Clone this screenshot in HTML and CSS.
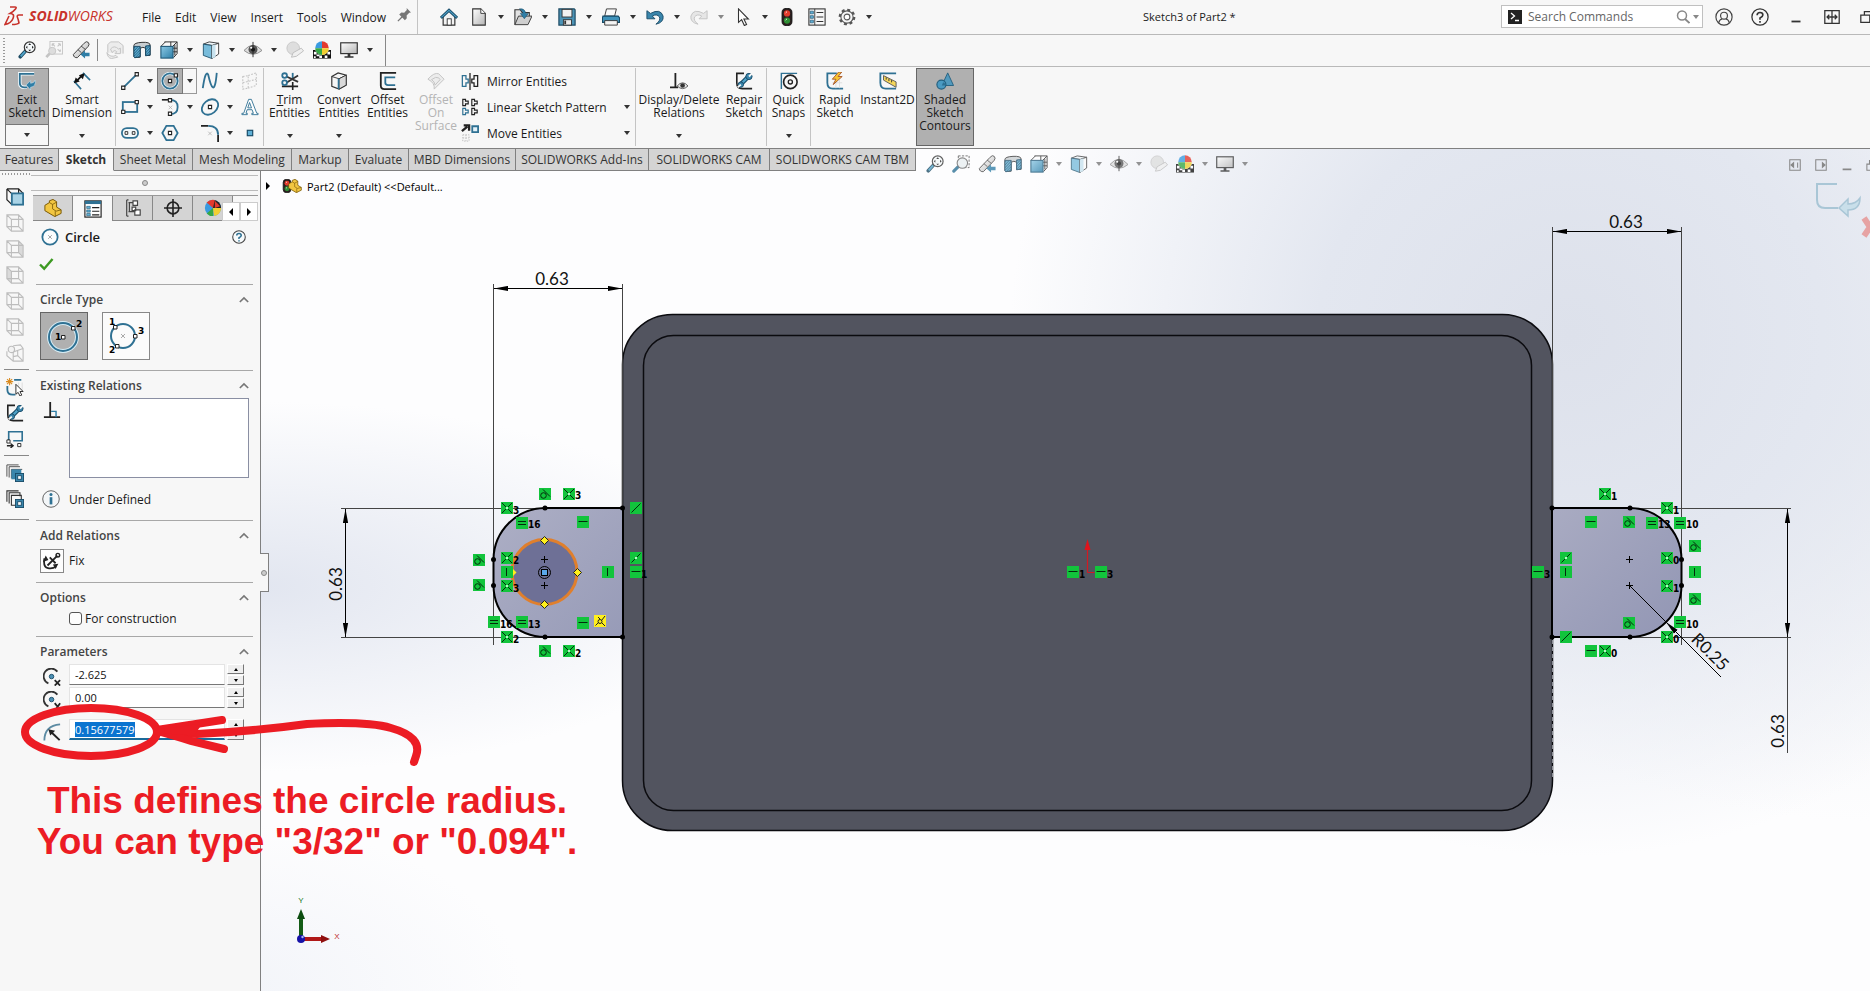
FILE: index.html
```html
<!DOCTYPE html>
<html lang="en">
<head>
<meta charset="utf-8">
<title>Sketch3 of Part2 *</title>
<link rel="stylesheet" href="styles.css">
</head>
<body>
<svg class="defs" aria-hidden="true">
  <defs>
    <linearGradient id="steel" x1="0" y1="0" x2="1" y2="1"><stop offset="0" stop-color="#8cc8e4"/><stop offset="1" stop-color="#2d7fa8"/></linearGradient>
    <linearGradient id="silver" x1="0" y1="0" x2="1" y2="1"><stop offset="0" stop-color="#ffffff"/><stop offset="1" stop-color="#b4b4b4"/></linearGradient>
    <linearGradient id="tabFill" x1="0" y1="0" x2="1" y2="1"><stop offset="0" stop-color="#a9abc2"/><stop offset="1" stop-color="#9296b4"/></linearGradient>
    <pattern id="hatch" width="3" height="3" patternUnits="userSpaceOnUse"><rect width="3" height="3" fill="#5fb0d6"/><path d="M0 3L3 0" stroke="#174a66"/></pattern>
    <marker id="arrow" markerUnits="userSpaceOnUse" markerWidth="15" markerHeight="6" refX="14" refY="3" orient="auto-start-reverse"><path d="M0 0.4L14 3L0 5.6z"/></marker>
    <g id="r-tan"><rect width="12" height="12" fill="#12c43c"/><path d="M4 1.500l7 7" stroke="#032b0c"/><circle cx="4.500" cy="7.500" r="2.800" fill="none" stroke="#032b0c"/></g>
    <g id="r-coin"><rect width="12" height="12" fill="#12c43c"/><path d="M1 1l10 10M11 1L1 11" stroke="#032b0c"/><path d="M5 5h2v2H5z" fill="#b8f0c4"/></g>
    <g id="r-eq"><rect width="12" height="12" fill="#12c43c"/><path d="M2 4.500h8M2 7.500h8" stroke="#032b0c"/></g>
    <g id="r-hor"><rect width="12" height="12" fill="#12c43c"/><path d="M1.500 5.500h9" stroke="#032b0c"/></g>
    <g id="r-ver"><rect width="12" height="12" fill="#12c43c"/><path d="M5.500 2v8" stroke="#032b0c"/></g>
    <g id="r-col"><rect width="12" height="12" fill="#12c43c"/><path d="M1.500 10.500l9-9" stroke="#032b0c"/></g>
    <g id="r-mid"><rect width="12" height="12" fill="#12c43c"/><path d="M1.500 10.500l9-9" stroke="#032b0c"/><path d="M5 5h2v2H5z" fill="#b8f0c4"/></g>
  </defs>
  <symbol id="i-zoomfit" viewBox="0 0 20 20"><path d="M8.500 11L2.500 17.500" stroke="#1d4b63" stroke-width="4" stroke-linecap="round"/><path d="M8 11.500L3 17" stroke="#4fa3c9" stroke-width="2"/><circle cx="13" cy="7" r="6" fill="#f4f8fa" stroke="#333" stroke-width="1.300"/><path d="M13 2.600l1.600 1.800h-3.200zM13 11.400l1.600-1.800h-3.200zM8.600 7l1.800-1.600v3.200zM17.400 7l-1.800-1.600v3.200z" fill="#222"/></symbol>
  <symbol id="i-zoomarea" viewBox="0 0 20 20"><path d="M7 1H19V14H14M7 1V4" fill="none" stroke="#444" stroke-dasharray="2.500 1.500"/><path d="M7 13L2 18" stroke="#2a6f93" stroke-width="3.400" stroke-linecap="round"/><circle cx="11.500" cy="9" r="5.800" fill="#e8eef1" stroke="#666" stroke-width="1.200"/></symbol>
  <symbol id="i-zoomgray" viewBox="0 0 20 20"><g fill="none" stroke="#c4c4c4"><rect x="5.500" y=".5" width="14" height="14"/><path d="M8 3l3 3M8 3h2.500M8 3v2.500M17 3l-3 3M17 3h-2.500M17 3v2.500M17 12l-3-3M17 12v-2.500" stroke-width="1.200"/><circle cx="8" cy="11" r="4" fill="#ddd"/><path d="M5 14L1.500 18" stroke-width="3"/></g></symbol>
  <symbol id="i-prev" viewBox="0 0 20 20"><path d="M1.500 15L13.500 2.500Q16-.5 18 1.500T18 6L6 18.500Q2 19 1.500 15z" fill="url(#silver)" stroke="#444" stroke-width="1.100"/><path d="M10 5.500l5 4M6.500 9.500l4 3.500" stroke="#444"/><path d="M19.500 13h-5v-2.500L9.500 15l5 4.500V17h5z" fill="#2f7ea6"/></symbol>
  <symbol id="i-redraw" viewBox="0 0 20 20"><g fill="#ececec" stroke="#c4c4c4" stroke-width="1.100"><path d="M2 13V4l3-3h9l5 4v9"/><path d="M5 9q4-5 9 0l2-1v6h-6l2-2q-3-3-5 1zM1 13q4 6 10 3l2 2-7 1.500Q2 19 1 13z"/></g></symbol>
  <symbol id="i-section" viewBox="0 0 20 20"><path d="M1 5q0-3 9-3.500t9 3V16h-5V8q-3-2-6 0v10l-6 .5-1-1z" fill="#c9ced1" stroke="#222"/><path d="M1 6h7v11.500l-6 1-1-1zM14 5.500l5-.5v10.500l-5 1z" fill="url(#hatch)" stroke="#174a66"/></symbol>
  <symbol id="i-orient" viewBox="0 0 20 20"><path d="M5 1h14v13l-4 4.500M1 6l5-5M14 6l5-5M12 1v5M14 12h5M16.500 4v12M19 8l-5 0" fill="none" stroke="#333" stroke-width="1.100"/><rect x="1" y="6" width="13.500" height="13" fill="url(#steel)" stroke="#1f5877" stroke-width="1.200"/></symbol>
  <symbol id="i-shade" viewBox="0 0 20 20"><path d="M1.500 3.500L8 1l10.500 1.500L12 5z" fill="#eef6fa" stroke="#333"/><path d="M1.500 3.500L11 5v14.500L1.500 16z" fill="#78bcdb" stroke="#21546e"/><path d="M11 5l7.500-2.500v12L11 19.500z" fill="#fafafa" stroke="#333"/><path d="M11 5l4-1.300v14l-4 1.800z" fill="#c7e2ee"/></symbol>
  <symbol id="i-eye" viewBox="0 0 20 20"><path d="M0 10.500Q10-1 20 10.500Q10 19 0 10.500z" fill="#ddd" stroke="#888"/><circle cx="10" cy="9.500" r="5" fill="#555"/><circle cx="10" cy="9.500" r="2.200" fill="#111"/><path d="M10 1v17" stroke="#222"/><circle cx="8" cy="7.500" r="1.200" fill="#fff"/></symbol>
  <symbol id="i-ballgray" viewBox="0 0 20 20"><circle cx="8" cy="8" r="7" fill="#dedede" stroke="#c6c6c6"/><path d="M6 18l2-5 9-5 2.500 3-8 6z" fill="#efefef" stroke="#bbb"/></symbol>
  <symbol id="i-scene" viewBox="0 0 20 20"><path d="M0 10h20v9.500H0z" fill="#111"/><path d="M1 12h3v3H1zM7 16h3v3H7zM1 17h2v2H1zM13 16h3v3h-3zM16 12h3v3h-3zM4 15h3v2H4z" fill="#fff"/><circle cx="10" cy="8" r="7.600" fill="#fff"/><path d="M10 8V.4A7.600 7.600 0 0 0 2.400 8z" fill="#3a9be0"/><path d="M10 8V.4A7.600 7.600 0 0 1 17.600 8z" fill="#e33a2f"/><path d="M10 8h7.600A7.600 7.600 0 0 1 10 15.600z" fill="#f2cf32"/><path d="M10 8H2.400A7.600 7.600 0 0 0 10 15.600z" fill="#36a844"/></symbol>
  <symbol id="i-monitor" viewBox="0 0 20 20"><rect x=".8" y="2" width="18.400" height="12" fill="url(#silver)" stroke="#333" stroke-width="1.300"/><path d="M8.500 14h3v3h3.500v1.500H5V17h3.500z" fill="#333"/></symbol>

  <symbol id="i-home" viewBox="0 0 20 20"><path d="M3.500 9v10h13V9L10 3z" fill="#f2f2f2" stroke="#333" stroke-width="1.300"/><rect x="8" y="12" width="4.500" height="7" fill="#fff" stroke="#333"/><path d="M1 11L10 2.500 19 11" fill="none" stroke="#174a66" stroke-width="3.400"/><path d="M1.500 10.500L10 2.500l8.500 8" fill="none" stroke="#4e9fc6" stroke-width="1.200"/></symbol>
  <symbol id="i-new" viewBox="0 0 20 20"><path d="M3 1h9l5 5v13H3z" fill="url(#silver)" stroke="#333" stroke-width="1.200"/><path d="M12 1v5h5" fill="#fff" stroke="#333"/></symbol>
  <symbol id="i-open" viewBox="0 0 20 20"><path d="M1 18.500V2h6l2 3h8v5" fill="#e2e2e2" stroke="#333" stroke-width="1.200"/><path d="M1 18.500L5 9h15l-4.500 9.500z" fill="#cfcfcf" stroke="#333"/><path d="M6 1q6-1 7 5h3l-4.500 6L7 6h3q0-3-4-5z" fill="#2f7ea6" stroke="#174a66" stroke-width=".6"/></symbol>
  <symbol id="i-save" viewBox="0 0 20 20"><path d="M1 1h17l1 1v17H1z" fill="#4b93b6" stroke="#1d4b63" stroke-width="1.300"/><rect x="4.500" y="1.500" width="11" height="8.500" fill="#f2f2f2" stroke="#333"/><rect x="6" y="13" width="9" height="6" fill="#ececec" stroke="#333"/><path d="M8 14v4" stroke="#333" stroke-width="2"/></symbol>
  <symbol id="i-print" viewBox="0 0 20 20"><path d="M5 1h11l-2 8H3z" fill="#fafafa" stroke="#333"/><path d="M1 9h17l1.500 2v5H.5v-5z" fill="#3f93bb" stroke="#174a66" stroke-width="1.200"/><path d="M3 14h14v5H3z" fill="#f4f4f4" stroke="#333"/></symbol>
  <symbol id="i-undo" viewBox="0 0 20 20"><path d="M1 3v9h9L7 9q5-3 8 1 1.500 4-4 8 9-2 8-9Q16 0 5 6z" fill="#3a86ac" stroke="#174a66"/></symbol>
  <symbol id="i-redo" viewBox="0 0 20 20"><path d="M19 3v9h-9l3-3Q8 6 5 10q-1.500 4 4 8Q0 16 1 9 4 0 15 6z" fill="#e6e6e6" stroke="#c2c2c2"/></symbol>
  <symbol id="i-cursor" viewBox="0 0 20 20"><path d="M5 1v15l3.500-3 3 6.500 2.500-1.200-3-6H16z" fill="#fff" stroke="#333" stroke-width="1.200"/></symbol>
  <symbol id="i-traffic" viewBox="0 0 20 20"><rect x="4.500" y=".5" width="11" height="19" rx="4.500" fill="#2c1f1f" stroke="#111"/><circle cx="10" cy="6" r="3.500" fill="#e33b2c"/><circle cx="10" cy="14" r="3.500" fill="#2f8f35"/><path d="M8.500 5.500L10 4M8.500 13.500L10 12" stroke="#fff"/></symbol>
  <symbol id="i-props" viewBox="0 0 20 20"><rect x="1" y="1" width="18" height="18" fill="#f8f8f8" stroke="#333" stroke-width="1.200"/><path d="M7.500 1v18" stroke="#333"/><path d="M2.500 3.500h3.500v3H2.500zM2.500 8.500h3.500v3H2.500zM2.500 13.500h3.500v3H2.500z" fill="#5fb0d6" stroke="#174a66" stroke-width=".7"/><path d="M9.500 5H17M9.500 10H17M9.500 15H17" stroke="#333" stroke-width="1.200"/></symbol>
  <symbol id="i-pm" viewBox="0 0 20 20"><rect x="1" y="1" width="18" height="18" fill="#fff" stroke="#222" stroke-width="1.300"/><path d="M1 1h18v3.500H1z" fill="#2f7193"/><path d="M3 7h4v2.500H3zM3 11h4v2.500H3zM3 15h4v2.500H3z" fill="#5fb0d6" stroke="#174a66" stroke-width=".6"/><path d="M9 8.500h8M9 12.500h8M9 16.500h8" stroke="#222" stroke-width="1.200"/></symbol>
  <symbol id="i-gear" viewBox="0 0 20 20"><circle cx="10" cy="10" r="8" fill="none" stroke="#555" stroke-width="2.600" stroke-dasharray="3.300 2.983"/><circle cx="10" cy="10" r="6.800" fill="#f5f5f5" stroke="#555" stroke-width="1.200"/><circle cx="10" cy="10" r="3.200" fill="#fff" stroke="#555" stroke-width="1.200"/></symbol>
  <symbol id="i-pin" viewBox="0 0 16 16"><path d="M10 1l5 5-2 .5-3 3 .2 3.300L8 15 1.500 8.500 4 6.200l3.200.2 3-3z" fill="#777" transform="translate(1 -1)"/><path d="M6 10L1 15" stroke="#777" stroke-width="1.500"/></symbol>
  <symbol id="i-user" viewBox="0 0 20 20"><g fill="none" stroke="#444" stroke-width="1.300"><circle cx="10" cy="10" r="9"/><circle cx="10" cy="8.500" r="3.800"/><path d="M4 16.500q1-4 4-4.500M16 16.500q-1-4-4-4.500"/></g></symbol>
  <symbol id="i-help" viewBox="0 0 20 20"><circle cx="10" cy="10" r="9" fill="none" stroke="#333" stroke-width="1.400"/><path d="M6.800 8Q6.800 5 10 5t3.200 2.800Q13.200 9.500 10 11v2M10 14.500v2" fill="none" stroke="#333" stroke-width="1.800"/></symbol>
  <symbol id="i-helpblue" viewBox="0 0 20 20"><circle cx="10" cy="10" r="9" fill="#f7fafb" stroke="#444" stroke-width="1.500"/><path d="M6.800 8Q6.800 5 10 5t3.200 2.800Q13.200 9.500 10 11v2M10 14.500v2" fill="none" stroke="#2f7193" stroke-width="2.200"/></symbol>
  <symbol id="i-split" viewBox="0 0 20 20"><path d="M2 3h16v14H2zM10 3v14M4.500 10h11M7 7.500L4.500 10 7 12.500M13 7.500l2.500 2.500-2.500 2.500" fill="none" stroke="#333" stroke-width="1.400"/></symbol>

  <symbol id="i-exit" viewBox="0 0 20 20"><path d="M18 2H2v10q0 5 5 5h3" fill="none" stroke="#eef7fb" stroke-width="4"/><path d="M18 2H2v10q0 5 5 5h3" fill="none" stroke="#2f7193" stroke-width="2"/><path d="M9 14.500l5-5v3q4 0 5-3.500 1.500 7-5 8v3z" fill="#2f7ea6" stroke="#cfe9f5" stroke-width=".6"/></symbol>
  <symbol id="i-dim" viewBox="0 0 20 20"><path d="M1 10l8 9M11 1l8 8" fill="none" stroke="#2f7193" stroke-width="1.800"/><path d="M3 11L11 3" stroke="#111" stroke-width="2"/><path d="M1 12.500L3 6l4.500 4.500zM13 1.500L6.500 3.500 11 8z" fill="#111"/></symbol>
  <symbol id="i-line" viewBox="0 0 20 20"><path d="M2 18L18 2" stroke="#2f7193" stroke-width="2"/><path d="M.7 15.700h3.600v3.600H.7zM15.700.7h3.600v3.600h-3.600z" fill="#fff" stroke="#222" stroke-width="1.200"/></symbol>
  <symbol id="i-circle" viewBox="0 0 20 20"><circle cx="10" cy="10" r="8.500" fill="none" stroke="#e7f4fa" stroke-width="3.500"/><circle cx="10" cy="10" r="8.500" fill="none" stroke="#2f7193" stroke-width="2"/><path d="M8.200 8.200h3.600v3.600H8.200zM14.700 2h3.600v3.600h-3.600z" fill="#fff" stroke="#222" stroke-width="1.200"/></symbol>
  <symbol id="i-spline" viewBox="0 0 20 20"><path d="M2 18Q5-3 8 3q3 13 5 14 3 2 4.500-16" fill="none" stroke="#2f7193" stroke-width="2"/></symbol>
  <symbol id="i-plane" viewBox="0 0 20 20"><path d="M2 5l6-1 0 14-6 1zM8 4l9-3v14l-9 3M2 12l15-4" fill="none" stroke="#c4c4c4" stroke-width="1.200" stroke-dasharray="2 1.500"/></symbol>
  <symbol id="i-rect" viewBox="0 0 20 20"><rect x="2" y="4.500" width="16" height="11" fill="none" stroke="#2f7193" stroke-width="2"/><path d="M.7 13.700h3.600v3.600H.7zM15.700 2.700h3.600v3.600h-3.600z" fill="#fff" stroke="#222" stroke-width="1.200"/></symbol>
  <symbol id="i-arc" viewBox="0 0 20 20"><path d="M10 2q8.500 0 8.500 8T10 18" fill="none" stroke="#2f7193" stroke-width="2"/><path d="M1 2h9" stroke="#222" stroke-width="1.800"/><path d="M8.200.7h3.600v3.600H8.200zM8.200 15.700h3.600v3.600H8.200z" fill="#fff" stroke="#222" stroke-width="1.200"/><path d="M8.500 8.500l4 4M12.500 8.500l-4 4" stroke="#aaa" stroke-width=".8"/></symbol>
  <symbol id="i-ellipse" viewBox="0 0 20 20"><ellipse cx="10" cy="10" rx="10" ry="7.500" fill="none" stroke="#2f7193" stroke-width="2" transform="rotate(-40 10 10)"/><path d="M8.200 8.200h3.600v3.600H8.200z" fill="#fff" stroke="#222" stroke-width="1.200"/></symbol>
  <symbol id="i-text" viewBox="0 0 20 20"><path d="M1 18.500h6v-1.500H5.500l1.300-4h5.500l1.500 4H12v1.500h7V17h-1.500L11.500 1.500h-3L3 17H1zM7.500 11L9.500 5l2.200 6z" fill="#fff" stroke="#2f7193"/></symbol>
  <symbol id="i-slot" viewBox="0 0 20 20"><rect x="1" y="4.500" width="18" height="11" rx="5.500" fill="#f2f9fc" stroke="#2f7193" stroke-width="2"/><path d="M4.500 8.500h3v3h-3zM12.500 8.500h3v3h-3z" fill="#fff" stroke="#222"/></symbol>
  <symbol id="i-poly" viewBox="0 0 20 20"><path d="M1.500 10L6 2h8l4.500 8L14 18H6z" fill="none" stroke="#2f7193" stroke-width="2"/><path d="M8.200 8.200h3.600v3.600H8.200z" fill="#fff" stroke="#222" stroke-width="1.200"/></symbol>
  <symbol id="i-fillet" viewBox="0 0 20 20"><path d="M0 2h8M19 12v8" stroke="#222" stroke-width="2"/><path d="M8 2q11 0 11 10" fill="none" stroke="#2f7193" stroke-width="2"/><path d="M8 8.500l4 4M12 8.500l-4 4" stroke="#aaa" stroke-width=".8"/></symbol>
  <symbol id="i-point" viewBox="0 0 20 20"><rect x="7" y="7" width="6" height="6" fill="#5fb0d6" stroke="#174a66" stroke-width="1.300"/></symbol>
  <symbol id="i-trim" viewBox="0 0 20 20"><path d="M1 16h18M13 11v9" stroke="#222" stroke-width="1.800"/><path d="M13 1v6" stroke="#2f7193" stroke-width="2"/><path d="M6 5l13 6M6 12L19 4" stroke="#333" stroke-width="2"/><circle cx="4" cy="4" r="2.600" fill="none" stroke="#2f7193" stroke-width="2"/><circle cx="4" cy="12" r="2.600" fill="none" stroke="#2f7193" stroke-width="2"/></symbol>
  <symbol id="i-convert" viewBox="0 0 20 20"><path d="M2 5l7-4 9 2.500v11L10 19l-8-3z" fill="#f6f6f6" stroke="#333" stroke-width="1.300"/><path d="M2 5l8 2.500 8-4M10 7.500V19" fill="none" stroke="#333"/><path d="M10 7.500l8-4v11L10 19z" fill="#d9d9d9" stroke="#333"/><path d="M9.500 7.500V19" stroke="#2f7193" stroke-width="1.800"/></symbol>
  <symbol id="i-offset" viewBox="0 0 20 20"><path d="M19 1H2v14q0 4 4 4h13" fill="none" stroke="#222" stroke-width="2"/><path d="M18 6H7v6q0 2.500 3 2.500h8" fill="none" stroke="#2f7193" stroke-width="2"/></symbol>
  <symbol id="i-offsurf" viewBox="0 0 20 20"><path d="M1 8Q8 0 13 2l6 6-11 11Q9 12 1 8zM5 8.500q5-4 8-2l1.500 2-5.500 6q-.5-4-4-6z" fill="#ececec" stroke="#c4c4c4" stroke-width="1.100"/></symbol>
  <symbol id="i-mirror" viewBox="0 0 20 20"><path d="M1.500 4v12h4v-4h2.500V8H5.500V4z" fill="none" stroke="#2f7193" stroke-width="1.400"/><path d="M18.500 4v12h-4v-4H12V8h2.500V4zM10 1v19" fill="none" stroke="#222" stroke-width="1.400"/></symbol>
  <symbol id="i-pattern" viewBox="0 0 20 20"><g fill="none" stroke="#222" stroke-width="1.300"><path d="M2 1.500h3v2h3v3H5v2H2zM12 1.500h3v2h3v3h-3v2h-3zM12 11.500h3v2h3v3h-3v2h-3z"/><path d="M2 11.500h3v2h3v3H5v2H2z" stroke="#2f7193"/></g></symbol>
  <symbol id="i-move" viewBox="0 0 20 20"><path d="M1 8L7 3M3 1.500h6v6" fill="none" stroke="#222" stroke-width="2.600"/><path d="M12.500 2.500h6.500v6.500h-6.500z" fill="#e4f2f9" stroke="#2f7193" stroke-width="2"/><path d="M2 12h7v7H2zM5.500 12v7M2 15.500h7" fill="none" stroke="#bbb" stroke-dasharray="1.500 1.500"/></symbol>
  <symbol id="i-disp" viewBox="0 0 20 20"><path d="M6 1v16M0 17h9" stroke="#222" stroke-width="2"/><path d="M8 15.500q6-7 12 0-6 6-12 0z" fill="#e6e6e6" stroke="#555"/><circle cx="14" cy="15" r="2.600" fill="#333"/></symbol>
  <symbol id="i-repair" viewBox="0 0 20 20"><path d="M10 1.500H2V12q0 6.500 6 6.500h11" fill="none" stroke="#222" stroke-width="1.800"/><path d="M6 14l9-9" stroke="#174a66" stroke-width="5"/><path d="M7 13l7-7" stroke="#4fa3c9" stroke-width="2.500"/><circle cx="6.500" cy="14" r="3" fill="#3a86ac" stroke="#174a66"/><circle cx="15.500" cy="5" r="3.500" fill="#3a86ac" stroke="#174a66"/><path d="M15.500 5L19 1.500M6.500 14L3 17" stroke="#f7f7f7" stroke-width="2"/></symbol>
  <symbol id="i-snap" viewBox="0 0 20 20"><path d="M1.500 19V1.500H19" fill="none" stroke="#2f7193" stroke-width="1.600"/><circle cx="11.500" cy="11" r="7.500" fill="none" stroke="#222" stroke-width="1.800"/><circle cx="11.500" cy="11" r="2.300" fill="none" stroke="#222" stroke-width="1.500"/></symbol>
  <symbol id="i-rapid" viewBox="0 0 20 20"><path d="M12 1.500H1.500V12q0 6.500 6 6.500H19" fill="none" stroke="#2f7193" stroke-width="2"/><path d="M7 12h11M11 9v9M15 9v9" stroke="#ddd"/><path d="M14 0L7 8h4l-3 6 10-9h-4.500l4-5z" fill="#f7c531" stroke="#a4522a"/></symbol>
  <symbol id="i-instant" viewBox="0 0 20 20"><path d="M19 1.500H1.500V12q0 6.500 6 6.500H19" fill="none" stroke="#2f7193" stroke-width="2"/><path d="M5 4l14 7v6L5 9z" fill="#f5d75a" stroke="#555"/><path d="M8 6v2.500M11 7.500V10M14 9v2.500" stroke="#333"/></symbol>
  <symbol id="i-shaded" viewBox="0 0 20 20"><path d="M13 1l6.500 14h-13z" fill="#5199bd" stroke="#235f7e"/><circle cx="6" cy="14" r="5" fill="#4a9ac2" stroke="#235f7e" stroke-width="1.300"/><path d="M8 11.500L6.500 15H11A5 5 0 0 0 8 11.500z" fill="#2d6f92"/></symbol>

  <symbol id="i-cubeblue" viewBox="0 0 20 20"><path d="M1 1h13v13M1 1l5 5M1 1v12l5 5M14 1l5 5" fill="none" stroke="#222" stroke-width="1.300"/><rect x="6.500" y="6" width="12.500" height="12.500" fill="#a9d3e6" stroke="#2f7193" stroke-width="2"/></symbol>
  <symbol id="i-cube" viewBox="0 0 20 20"><path d="M1 1h13v13H1zM6 6h13v13H6zM1 1l5 5M14 1l5 5M1 14l5 5M14 14l5 5" fill="none" stroke="#bdbdbd" stroke-width="1.200"/></symbol>
  <symbol id="i-cubeR" viewBox="0 0 20 20"><path d="M14 1l5 5v13l-5-5z" fill="#dadada"/><use href="#i-cube"/></symbol>
  <symbol id="i-cubeL" viewBox="0 0 20 20"><path d="M1 1l5 5v13l-5-5z" fill="#dadada"/><use href="#i-cube"/></symbol>
  <symbol id="i-cubeiso" viewBox="0 0 20 20"><path d="M8 2l8-1 3 4v14H8l-7-6V8M8 9l11-4M8 9v10M8 14l5-1 6 6M13 7v6" fill="none" stroke="#bdbdbd" stroke-width="1.200"/><circle cx="6" cy="6" r="3.500" fill="#f2f2f2" stroke="#bdbdbd" stroke-width="1.300"/></symbol>
  <symbol id="i-sknew" viewBox="0 0 20 20"><path d="M9 2h8M1.500 9v4q0 5.500 6 5.500h3" fill="none" stroke="#2f7193" stroke-width="2"/><path d="M14 5v5M18 5v10" stroke="#ddd"/><path d="M4 0v8M0 4h8M1.200 1.200l5.600 5.600M6.800 1.200L1.200 6.800" stroke="#d98a1f" stroke-width="1.200"/><path d="M11 7v11l2.500-2 2 4 2-1-2-4H19z" fill="#fff" stroke="#222"/></symbol>
  <symbol id="i-skmove" viewBox="0 0 20 20"><path d="M3 11V2h15v10H8" fill="none" stroke="#2f7193" stroke-width="1.800"/><path d="M1 11h3.500v3.500H1zM13 15h3.500v3.500H13z" fill="#fff" stroke="#222"/><path d="M1 17.500h6M5 15l3 2.500L5 20" fill="none" stroke="#222" stroke-width="1.400"/></symbol>
  <symbol id="i-stack1" viewBox="0 0 20 20"><path d="M1 14V1h13M3.500 15V3h12M6 16V6h12" fill="none" stroke="#444"/><path d="M6 6h11v11H6z" fill="#3a86ac"/><rect x="10.500" y="10.500" width="9" height="9" fill="#3a86ac" stroke="#174a66"/><rect x="13" y="13" width="4" height="4" fill="#fff" stroke="#174a66"/></symbol>
  <symbol id="i-stack2" viewBox="0 0 20 20"><path d="M1 13V1h13M3.500 15V3h12v4M6 17V6h11v11z" fill="none" stroke="#333" stroke-width="1.200"/><rect x="10.500" y="10.500" width="9" height="9" fill="#3a86ac" stroke="#174a66"/><rect x="13" y="13" width="4" height="4" fill="#fff" stroke="#174a66"/></symbol>
  <symbol id="i-part" viewBox="0 0 20 20"><path d="M1 7l5-3V2l4-1.500L14 3v6l5 3v4l-7 3.500L1 13z" fill="#f2c641" stroke="#7a5a08" stroke-width="1.100"/><path d="M6 4l3.500 2v5l4 2.500 5.500-1.500M12.500 13.500v6M9.500 6L14 3.500" fill="none" stroke="#7a5a08" stroke-width=".9"/></symbol>
  <symbol id="i-config" viewBox="0 0 20 20"><path d="M3 1v18M3 1h2M3 19h2M5 4h5M5 14h7M6 4v10" fill="none" stroke="#444" stroke-width="1.300"/><path d="M10 2h5v5h-5zM12 12h6v6h-6zM9 9h4v4H9z" fill="#fff" stroke="#444" stroke-width="1.300"/></symbol>
  <symbol id="i-target" viewBox="0 0 20 20"><circle cx="10" cy="10" r="6.500" fill="none" stroke="#222" stroke-width="1.800"/><path d="M10 0v20M0 10h20" stroke="#222" stroke-width="1.800"/></symbol>
  <symbol id="i-ball" viewBox="0 0 20 20"><circle cx="10" cy="10" r="9" fill="#3a9be0"/><path d="M10 10V1a9 9 0 0 1 9 9z" fill="#222"/><path d="M10 10L3 4a9 9 0 0 1 9-3z" fill="#e33a2f"/><path d="M10 10h9a9 9 0 0 1-8 9z" fill="#f2cf32"/><path d="M10 10v9a9 9 0 0 1-7-3z" fill="#36a844"/><path d="M12 2l6 6-6 2z" fill="#e33a2f"/></symbol>
  <symbol id="i-circlep" viewBox="0 0 20 20"><circle cx="10" cy="10" r="8.500" fill="#fbfdfe" stroke="#2f7193" stroke-width="2"/><path d="M8 8l4 4M12 8l-4 4" stroke="#999"/></symbol>
  <symbol id="i-check" viewBox="0 0 16 14"><path d="M1 7l4.500 4.500L14.500 1" fill="none" stroke="#3d9a22" stroke-width="2.600"/></symbol>
  <symbol id="i-chev" viewBox="0 0 12 8"><path d="M1 7l5-5 5 5" fill="none" stroke="#777" stroke-width="2"/></symbol>
  <symbol id="i-perp" viewBox="0 0 20 20"><path d="M8 1v17M1 18h18" stroke="#222" stroke-width="2"/><path d="M9 11.500h5.500V18" fill="none" stroke="#2f7ea6" stroke-width="1.600"/></symbol>
  <symbol id="i-info" viewBox="0 0 20 20"><circle cx="10" cy="10" r="9.200" fill="#f3f6f8" stroke="#555"/><circle cx="10" cy="5" r="1.700" fill="#2f7193"/><path d="M10 8v8" stroke="#2f7193" stroke-width="3"/></symbol>
  <symbol id="i-anchor" viewBox="0 0 20 20"><path d="M16 4L5 15M7.500 6l6.500 6.500M1.500 7q-1.500 10 4 11t9-2" fill="none" stroke="#222" stroke-width="2"/><circle cx="16.500" cy="3.500" r="2" fill="none" stroke="#222" stroke-width="1.600"/><path d="M0 11L3 4l3 5zM11 14l6-1-3 6z" fill="#222"/></symbol>
  <symbol id="i-cx" viewBox="0 0 20 20"><path d="M6 17A8.500 8.500 0 1 1 16 4" fill="none" stroke="#333" stroke-width="2"/><circle cx="9.500" cy="9.500" r="2.500" fill="#4b8fb3" stroke="#174a66"/><path d="M13 13.500l6 6M19 13.500l-6 6" stroke="#222" stroke-width="2"/></symbol>
  <symbol id="i-cy" viewBox="0 0 20 20"><path d="M6 17A8.500 8.500 0 1 1 16 4" fill="none" stroke="#333" stroke-width="2"/><circle cx="9.500" cy="9.500" r="2.500" fill="#4b8fb3" stroke="#174a66"/><path d="M13 13.500l3 3.500M19 13.500l-4.500 6.500" stroke="#222" stroke-width="2"/></symbol>
  <symbol id="i-radius" viewBox="0 0 20 20"><path d="M1.500 19.500Q1.500 3 19 1.500" fill="none" stroke="#5c8ba3" stroke-width="2"/><path d="M18.500 19L9 10" stroke="#222" stroke-width="2.200"/><path d="M6 7l7.500 1.500L8 14z" fill="#222"/></symbol>
</svg>

<header class="titlebar">
  <div class="brand">
    <svg class="brand-mark" viewBox="0 0 20 20"><g fill="none" stroke="#c8322b" stroke-width="1.600"><path d="M6 1h5q2 0 .5 2T6 7.500q5 0 3 5T1 18.500L5 10"/><path d="M19 9h-4q-2.500 0-1.500 2.500T15 17q-1.500 1.500-7 1.500"/></g></svg>
    <span class="brand-name"><b>SOLID</b>WORKS</span>
  </div>
  <nav class="menu" aria-label="Main menu"><button>File</button><button>Edit</button><button>View</button><button>Insert</button><button>Tools</button><button>Window</button></nav>
  <button class="pin" aria-label="Pin menu"><svg class="ic16"><use href="#i-pin"/></svg></button>
  <div class="quick">
    <button aria-label="Home"><svg class="ic"><use href="#i-home"/></svg></button>
    <button aria-label="New"><svg class="ic"><use href="#i-new"/></svg></button><button class="dd" aria-label="New options"></button>
    <button aria-label="Open"><svg class="ic"><use href="#i-open"/></svg></button><button class="dd" aria-label="Open options"></button>
    <button aria-label="Save"><svg class="ic"><use href="#i-save"/></svg></button><button class="dd" aria-label="Save options"></button>
    <button aria-label="Print"><svg class="ic"><use href="#i-print"/></svg></button><button class="dd" aria-label="Print options"></button>
    <button aria-label="Undo"><svg class="ic"><use href="#i-undo"/></svg></button><button class="dd" aria-label="Undo options"></button>
    <button aria-label="Redo"><svg class="ic"><use href="#i-redo"/></svg></button><button class="dd faint" aria-label="Redo options"></button>
    <button aria-label="Select"><svg class="ic"><use href="#i-cursor"/></svg></button><button class="dd" aria-label="Select options"></button>
    <button aria-label="Rebuild"><svg class="ic"><use href="#i-traffic"/></svg></button>
    <button aria-label="File properties"><svg class="ic"><use href="#i-props"/></svg></button>
    <button aria-label="Options"><svg class="ic"><use href="#i-gear"/></svg></button><button class="dd" aria-label="More options"></button>
  </div>
  <h1 class="doc-title">Sketch3 of Part2 *</h1>
  <div class="search">
    <svg class="prompt" viewBox="0 0 14 14"><rect width="14" height="14" fill="#222"/><path d="M3 3l3.500 3L3 9M7 10.500h4" fill="none" stroke="#fff" stroke-width="1.300"/></svg>
    <input type="search" aria-label="Search Commands" placeholder="Search Commands">
    <svg class="lens" viewBox="0 0 14 14"><circle cx="6" cy="5.500" r="4.500" fill="none" stroke="#888" stroke-width="1.500"/><path d="M9 9l4.500 4" stroke="#888" stroke-width="1.800"/></svg>
    <button class="dd gray" aria-label="Search scope"></button>
  </div>
  <div class="win">
    <button aria-label="Account"><svg class="ic"><use href="#i-user"/></svg></button>
    <button aria-label="Help"><svg class="ic"><use href="#i-help"/></svg></button>
    <button aria-label="Minimize"><svg class="ic" viewBox="0 0 20 20"><path d="M5 15h10" stroke="#333" stroke-width="2"/></svg></button>
    <button aria-label="Span displays"><svg class="ic"><use href="#i-split"/></svg></button>
    <button aria-label="Restore"><svg class="ic" viewBox="0 0 20 20"><path d="M2 8h10v8H2zM6 8V4h10v8h-3" fill="none" stroke="#333" stroke-width="1.400"/></svg></button>
  </div>
</header>

<div class="viewbar">
  <div class="icons">
    <button aria-label="Zoom to Fit"><svg class="ic"><use href="#i-zoomfit"/></svg></button><button aria-label="Zoom to Selection"><svg class="ic"><use href="#i-zoomgray"/></svg></button><button aria-label="Previous View"><svg class="ic"><use href="#i-prev"/></svg></button><i class="vsep"></i><button aria-label="Redraw"><svg class="ic"><use href="#i-redraw"/></svg></button><button aria-label="Section View"><svg class="ic"><use href="#i-section"/></svg></button><button aria-label="View Orientation"><svg class="ic"><use href="#i-orient"/></svg></button><button class="dd" aria-label="Orientation list"></button><button aria-label="Display Style"><svg class="ic"><use href="#i-shade"/></svg></button><button class="dd" aria-label="Style list"></button><button aria-label="Hide/Show Items"><svg class="ic"><use href="#i-eye"/></svg></button><button class="dd" aria-label="Item list"></button><button aria-label="Edit Appearance"><svg class="ic"><use href="#i-ballgray"/></svg></button><button aria-label="Apply Scene"><svg class="ic"><use href="#i-scene"/></svg></button><button aria-label="View Settings"><svg class="ic"><use href="#i-monitor"/></svg></button><button class="dd" aria-label="Settings list"></button>
  </div>
</div>

<div class="ribbon">
  <div class="exit"><button class="big on"><svg class="ic"><use href="#i-exit"/></svg><span>Exit Sketch</span></button><button class="dd" aria-label="Exit options"></button></div>
  <div class="cell"><button class="big"><svg class="ic"><use href="#i-dim"/></svg><span>Smart Dimension</span></button><button class="dd" aria-label="Dimension options"></button></div>
  <div class="tools">
    <button aria-label="Line"><svg class="ic"><use href="#i-line"/></svg></button><button class="dd" aria-label="Line types"></button><button class="on" aria-label="Circle"><svg class="ic"><use href="#i-circle"/></svg></button><button class="dd boxed" aria-label="Circle types"></button><button aria-label="Spline"><svg class="ic"><use href="#i-spline"/></svg></button><button class="dd" aria-label="Spline types"></button><button aria-label="Plane"><svg class="ic"><use href="#i-plane"/></svg></button>
    <button aria-label="Rectangle"><svg class="ic"><use href="#i-rect"/></svg></button><button class="dd" aria-label="Rectangle types"></button><button aria-label="Arc"><svg class="ic"><use href="#i-arc"/></svg></button><button class="dd" aria-label="Arc types"></button><button aria-label="Ellipse"><svg class="ic"><use href="#i-ellipse"/></svg></button><button class="dd" aria-label="Ellipse types"></button><button aria-label="Text"><svg class="ic"><use href="#i-text"/></svg></button>
    <button aria-label="Slot"><svg class="ic"><use href="#i-slot"/></svg></button><button class="dd" aria-label="Slot types"></button><button aria-label="Polygon"><svg class="ic"><use href="#i-poly"/></svg></button><i></i><button aria-label="Fillet"><svg class="ic"><use href="#i-fillet"/></svg></button><button class="dd" aria-label="Fillet types"></button><button aria-label="Point"><svg class="ic"><use href="#i-point"/></svg></button>
  </div>
  <div class="cell"><button class="big"><svg class="ic"><use href="#i-trim"/></svg><span><u>T</u>rim Entities</span></button><button class="dd" aria-label="Trim options"></button></div>
  <div class="cell"><button class="big"><svg class="ic"><use href="#i-convert"/></svg><span>Convert Entities</span></button><button class="dd" aria-label="Convert options"></button></div>
  <div class="cell"><button class="big"><svg class="ic"><use href="#i-offset"/></svg><span>Offset Entities</span></button></div>
  <div class="cell"><button class="big" disabled><svg class="ic"><use href="#i-offsurf"/></svg><span>Offset On Surface</span></button></div>
  <div class="rows">
    <button><svg class="ic"><use href="#i-mirror"/></svg>Mirror Entities</button><i></i>
    <button><svg class="ic"><use href="#i-pattern"/></svg>Linear Sketch Pattern</button><button class="dd" aria-label="Pattern types"></button>
    <button><svg class="ic"><use href="#i-move"/></svg>Move Entities</button><button class="dd" aria-label="Move types"></button>
  </div>
  <div class="cell"><button class="big"><svg class="ic"><use href="#i-disp"/></svg><span>Display/Delete Relations</span></button><button class="dd" aria-label="Relation options"></button></div>
  <div class="cell ruled"><button class="big"><svg class="ic"><use href="#i-repair"/></svg><span>Repair Sketch</span></button></div>
  <div class="cell ruled"><button class="big"><svg class="ic"><use href="#i-snap"/></svg><span>Quick Snaps</span></button><button class="dd" aria-label="Snap options"></button></div>
  <div class="cell"><button class="big"><svg class="ic"><use href="#i-rapid"/></svg><span>Rapid Sketch</span></button></div>
  <div class="cell"><button class="big"><svg class="ic"><use href="#i-instant"/></svg><span>Instant2D</span></button></div>
  <div class="cell"><button class="big on framed"><svg class="ic"><use href="#i-shaded"/></svg><span>Shaded Sketch Contours</span></button></div>
</div>

<main class="workspace">
  <div class="tabrow">
    <div class="tabs" role="tablist"><button role="tab">Features</button><button role="tab" class="active" aria-selected="true">Sketch</button><button role="tab">Sheet Metal</button><button role="tab">Mesh Modeling</button><button role="tab">Markup</button><button role="tab">Evaluate</button><button role="tab">MBD Dimensions</button><button role="tab">SOLIDWORKS Add-Ins</button><button role="tab">SOLIDWORKS CAM</button><button role="tab">SOLIDWORKS CAM TBM</button></div>
    <div class="hud">
      <button aria-label="Zoom to Fit"><svg class="ic"><use href="#i-zoomfit"/></svg></button><button aria-label="Zoom to Area"><svg class="ic"><use href="#i-zoomarea"/></svg></button><button aria-label="Previous View"><svg class="ic"><use href="#i-prev"/></svg></button><button aria-label="Section View"><svg class="ic"><use href="#i-section"/></svg></button><button aria-label="View Orientation"><svg class="ic"><use href="#i-orient"/></svg></button><button class="dd" aria-label="Orientation list"></button><button aria-label="Display Style"><svg class="ic"><use href="#i-shade"/></svg></button><button class="dd" aria-label="Style list"></button><button aria-label="Hide/Show Items"><svg class="ic"><use href="#i-eye"/></svg></button><button class="dd" aria-label="Item list"></button><button aria-label="Edit Appearance"><svg class="ic"><use href="#i-ballgray"/></svg></button><button aria-label="Apply Scene"><svg class="ic"><use href="#i-scene"/></svg></button><button class="dd" aria-label="Scene list"></button><button aria-label="View Settings"><svg class="ic"><use href="#i-monitor"/></svg></button><button class="dd" aria-label="Settings list"></button>
    </div>
    <div class="docwin">
      <button aria-label="Tile left"><svg class="ic16" viewBox="0 0 16 16"><path d="M2 2h12v12H2zM11 5v6" fill="none" stroke="#888" stroke-width="1.200"/><path d="M7 4v8L2.500 8z" fill="#888"/></svg></button>
      <button aria-label="Tile right"><svg class="ic16" viewBox="0 0 16 16"><path d="M2 2h12v12H2z" fill="none" stroke="#888" stroke-width="1.200"/><path d="M9 4v8l4.500-4z" fill="#888"/></svg></button>
      <button aria-label="Minimize document"><svg class="ic16" viewBox="0 0 16 16"><path d="M3 13h10" stroke="#888" stroke-width="2"/></svg></button>
      <button aria-label="Restore document"><svg class="ic16" viewBox="0 0 16 16"><path d="M1 7h8v7H1zM4 7V3h8v7H9" fill="none" stroke="#888" stroke-width="1.200"/></svg></button>
    </div>
  </div>

  <div class="body">
    <aside class="rail" aria-label="View shortcuts">
      <button aria-label="Front"><svg class="ic"><use href="#i-cubeblue"/></svg></button><button aria-label="Back"><svg class="ic"><use href="#i-cube"/></svg></button><button aria-label="Right"><svg class="ic"><use href="#i-cubeR"/></svg></button><button aria-label="Left"><svg class="ic"><use href="#i-cubeL"/></svg></button><button aria-label="Top"><svg class="ic"><use href="#i-cube"/></svg></button><button aria-label="Bottom"><svg class="ic"><use href="#i-cube"/></svg></button><button aria-label="Isometric"><svg class="ic"><use href="#i-cubeiso"/></svg></button>
      <hr>
      <button aria-label="Sketch select"><svg class="ic"><use href="#i-sknew"/></svg></button><button aria-label="Repair sketch"><svg class="ic"><use href="#i-repair"/></svg></button><button aria-label="Move sketch"><svg class="ic"><use href="#i-skmove"/></svg></button>
      <hr>
      <button aria-label="Copy body"><svg class="ic"><use href="#i-stack1"/></svg></button><button aria-label="Copy sketch"><svg class="ic"><use href="#i-stack2"/></svg></button>
      <hr class="last">
    </aside>

    <section class="panel" aria-label="Circle properties">
      <div class="grip"><i></i></div>
      <div class="ptabs" role="tablist">
        <button role="tab" aria-label="Feature tree"><svg class="ic"><use href="#i-part"/></svg></button><button role="tab" class="active" aria-label="Properties"><svg class="ic"><use href="#i-pm"/></svg></button><button role="tab" aria-label="Configurations"><svg class="ic"><use href="#i-config"/></svg></button><button role="tab" aria-label="Dimensions"><svg class="ic"><use href="#i-target"/></svg></button><button role="tab" aria-label="Display"><svg class="ic"><use href="#i-ball"/></svg></button>
        <div class="pnav"><button aria-label="Previous tabs"><svg viewBox="0 0 8 8"><path d="M6 0v8L2 4z"/></svg></button><button aria-label="Next tabs"><svg viewBox="0 0 8 8"><path d="M2 0v8l4-4z"/></svg></button></div>
      </div>
      <div class="phead"><svg class="ic"><use href="#i-circlep"/></svg><h2>Circle</h2><button aria-label="Help"><svg class="ic16"><use href="#i-helpblue"/></svg></button></div>
      <div class="pok"><button aria-label="OK"><svg class="check"><use href="#i-check"/></svg></button></div>

      <section class="group">
        <h3>Circle Type<svg class="chev"><use href="#i-chev"/></svg></h3>
        <div class="types">
          <button class="on" aria-label="Center circle"><svg viewBox="0 0 40 40"><circle cx="19" cy="21" r="14" fill="none" stroke="#d7edf6" stroke-width="4"/><circle cx="19" cy="21" r="14" fill="none" stroke="#2f7193" stroke-width="2"/><path d="M17.500 19.500h3.500v3.500h-3.500zM27.500 10.500h3.500v3.500h-3.500z" fill="#fff" stroke="#222"/><text x="11" y="24">1</text><text x="32" y="11">2</text></svg></button>
          <button aria-label="Perimeter circle"><svg viewBox="0 0 40 40"><circle cx="17" cy="20" r="12" fill="none" stroke="#2f7193" stroke-width="2"/><path d="M7.500 9.500h3.500v3.500H7.500zM27.500 18.500h3.500v3.500h-3.500zM9.500 28.500h3.500v3.500H9.500z" fill="#fff" stroke="#222"/><path d="M15 18l4 4M19 18l-4 4" stroke="#aaa"/><text x="3" y="9">1</text><text x="32" y="18">3</text><text x="3" y="37">2</text></svg></button>
        </div>
      </section>
      <section class="group">
        <h3>Existing Relations<svg class="chev"><use href="#i-chev"/></svg></h3>
        <div class="relations"><svg class="ic"><use href="#i-perp"/></svg><div class="list" role="listbox" aria-label="Existing Relations"></div></div>
        <div class="status"><svg class="ic"><use href="#i-info"/></svg><span>Under Defined</span></div>
      </section>
      <section class="group">
        <h3>Add Relations<svg class="chev"><use href="#i-chev"/></svg></h3>
        <div class="fix"><button id="fix"><svg class="ic"><use href="#i-anchor"/></svg></button><label for="fix">Fix</label></div>
      </section>
      <section class="group">
        <h3>Options<svg class="chev"><use href="#i-chev"/></svg></h3>
        <div class="opt"><input type="checkbox" id="constr"><label for="constr">For construction</label></div>
      </section>
      <section class="group">
        <h3>Parameters<svg class="chev"><use href="#i-chev"/></svg></h3>
        <div class="param"><svg class="ic"><use href="#i-cx"/></svg><input type="text" aria-label="Center X" value="-2.625"><div class="spin"><button aria-label="Increase"><svg viewBox="0 0 4 3"><path d="M0 3h4L2 0z"/></svg></button><button aria-label="Decrease"><svg viewBox="0 0 4 3"><path d="M0 0h4L2 3z"/></svg></button></div></div>
        <div class="param"><svg class="ic"><use href="#i-cy"/></svg><input type="text" aria-label="Center Y" value="0.00"><div class="spin"><button aria-label="Increase"><svg viewBox="0 0 4 3"><path d="M0 3h4L2 0z"/></svg></button><button aria-label="Decrease"><svg viewBox="0 0 4 3"><path d="M0 0h4L2 3z"/></svg></button></div></div>
        <div class="param radius"><svg class="ic"><use href="#i-radius"/></svg><input type="text" id="radius" aria-label="Radius" value="0.15677579"><div class="spin"><button aria-label="Increase"><svg viewBox="0 0 4 3"><path d="M0 3h4L2 0z"/></svg></button><button aria-label="Decrease"><svg viewBox="0 0 4 3"><path d="M0 0h4L2 3z"/></svg></button></div></div>
      </section>
      <button class="handle" aria-label="Collapse panel"><i></i></button>
    </section>

    <section class="viewport" aria-label="Graphics area">
      <div class="crumb"><button aria-label="Expand tree"><svg viewBox="0 0 8 8"><path d="M2 0v8l4-4z"/></svg></button><svg class="ic16"><use href="#i-traffic"/></svg><svg class="ic16 part"><use href="#i-part"/></svg><span>Part2 (Default) &lt;&lt;Default...</span></div>
      <svg class="drawing" viewBox="261 171 1609 820" preserveAspectRatio="xMidYMid meet">
        <g fill="none" stroke="#a9c6d6" stroke-width="2"><path d="M1837 184h-20v16q0 8 8 8h13"/><path d="M1839 208l9-9v5q8 0 12-6 0 12-12 12v6z" fill="#c9dfea" stroke-width="1.500"/></g>
        <path d="M1864 218l12 18M1876 218l-12 18" stroke="#e6a3a3" stroke-width="6"/>

        <rect x="622.500" y="314.500" width="930" height="516" rx="50" fill="#52545f" stroke="#0b0b0f" stroke-width="1.500"/>
        <rect x="643.500" y="335.500" width="888" height="475" rx="30" fill="none" stroke="#0b0b0f" stroke-width="1.500"/>
        <path d="M1552.500 640v140" stroke="#8d8f98" stroke-dasharray="4 3"/>

        <g stroke="#444" fill="none">
          <path d="M493.500 284v361M622.500 284v224M341 508.500h204M341 637.500h204"/>
          <path d="M1552.500 227v281M1681.500 227v418M1630 508.500h161M1630 637.500h161M1787.500 508v245"/>
        </g>
        <path d="M623 508H545A52 52 0 0 0 493.500 559V586A52 52 0 0 0 545 637H623z" fill="url(#tabFill)" fill-opacity=".95"/>
        <path d="M1552 508h78a52 52 0 0 1 51.500 51v27a52 52 0 0 1-51.500 51h-78z" fill="url(#tabFill)"/>
        <g fill="none" stroke="#000" stroke-width="2">
          <path d="M623 508H545A52 52 0 0 0 493.500 559V586A52 52 0 0 0 545 637H623z"/>
          <path d="M1552 508h78a52 52 0 0 1 51.500 51v27a52 52 0 0 1-51.500 51h-78z"/>
        </g>
        <circle cx="544.500" cy="572" r="32.500" fill="#6e7096" stroke="#e07f2c" stroke-width="3"/>
        <g><circle cx="545" cy="508" r="2.500"/><circle cx="622.500" cy="508" r="2.500"/><circle cx="545" cy="637" r="2.500"/><circle cx="622.500" cy="637" r="2.500"/><circle cx="493.500" cy="559.500" r="2.500"/><circle cx="493.500" cy="585.500" r="2.500"/><circle cx="1552" cy="508" r="2.500"/><circle cx="1630" cy="508" r="2.500"/><circle cx="1552" cy="637" r="2.500"/><circle cx="1630" cy="637" r="2.500"/><circle cx="1681.500" cy="559.500" r="2.500"/><circle cx="1681.500" cy="585.500" r="2.500"/></g>
        <g stroke="#000" class="dimline"><path d="M494 288.500h128"/><path d="M1553 231.500h128"/><path d="M345.500 509v128"/><path d="M1787.500 509v128"/></g>
        <g stroke="#000"><path d="M1630 586l36 36"/><path d="M1721 677l-55-55" marker-end="url(#arrow)"/></g>
        <path d="M541 559.500h7M544.500 556v7M541 585.500h7M544.500 582v7M1626 559.500h7M1629.500 556v7M1626 585.500h7M1629.500 582v7" stroke="#000"/>
        <circle cx="544.500" cy="572.500" r="6" fill="none" stroke="#000"/><rect x="541.500" y="569.500" width="6" height="6" fill="#5aa7ea" stroke="#000"/>

        <g class="dimtext"><text x="552" y="285">0.63</text><text x="1626" y="228">0.63</text><text transform="translate(342 584) rotate(-90)">0.63</text><text transform="translate(1784 731) rotate(-90)">0.63</text><text transform="translate(1706 656) rotate(45)">R0.25</text></g>

        <g>
          <use href="#r-tan" x="539" y="488"/><use href="#r-tan" x="473" y="554"/><use href="#r-tan" x="473" y="579"/><use href="#r-tan" x="539" y="645"/>
          <use href="#r-coin" x="563" y="488"/><use href="#r-coin" x="501" y="502"/><use href="#r-coin" x="501" y="552"/><use href="#r-coin" x="501" y="580"/><use href="#r-coin" x="501" y="631"/><use href="#r-coin" x="563" y="645"/>
          <use href="#r-eq" x="516" y="517"/><use href="#r-eq" x="488" y="616"/><use href="#r-eq" x="516" y="616"/>
          <use href="#r-hor" x="577" y="516"/><use href="#r-hor" x="577" y="617"/><use href="#r-hor" x="630" y="566"/>
          <use href="#r-ver" x="602" y="566"/><use href="#r-ver" x="501" y="566"/>
          <use href="#r-col" x="630" y="502"/><use href="#r-mid" x="630" y="552"/>
          <use href="#r-coin" x="1599" y="488"/><use href="#r-coin" x="1661" y="502"/><use href="#r-coin" x="1661" y="552"/><use href="#r-coin" x="1661" y="580"/><use href="#r-coin" x="1661" y="631"/><use href="#r-coin" x="1599" y="645"/>
          <use href="#r-hor" x="1585" y="516"/><use href="#r-hor" x="1585" y="645"/><use href="#r-hor" x="1532" y="566"/>
          <use href="#r-tan" x="1623" y="516"/><use href="#r-tan" x="1689" y="540"/><use href="#r-tan" x="1689" y="593"/><use href="#r-tan" x="1623" y="617"/>
          <use href="#r-eq" x="1646" y="517"/><use href="#r-eq" x="1674" y="517"/><use href="#r-eq" x="1674" y="616"/>
          <use href="#r-mid" x="1560" y="552"/><use href="#r-col" x="1560" y="631"/><use href="#r-ver" x="1560" y="566"/><use href="#r-ver" x="1689" y="566"/>
          <use href="#r-hor" x="1067" y="566"/><use href="#r-hor" x="1095" y="566"/>
        </g>
        <g class="relnum">
          <text x="575" y="499">3</text><text x="513" y="514">3</text><text x="528" y="528">16</text><text x="513" y="564">2</text><text x="513" y="592">3</text><text x="500" y="628">16</text><text x="528" y="628">13</text><text x="513" y="643">2</text><text x="575" y="657">2</text><text x="641" y="578">1</text>
          <text x="1611" y="500">1</text><text x="1673" y="514">1</text><text x="1658" y="528">13</text><text x="1686" y="528">10</text><text x="1673" y="564">0</text><text x="1673" y="592">1</text><text x="1686" y="628">10</text><text x="1673" y="643">0</text><text x="1611" y="657">0</text><text x="1544" y="578">3</text><text x="1079" y="578">1</text><text x="1107" y="578">3</text>
        </g>
        <rect x="594" y="615" width="12" height="12" fill="#fff01c"/><path d="M595.500 625.500l3-3M601.500 620.500l3.500-4.500M598 617l2 2M602 623l3 3" stroke="#222"/><circle cx="600" cy="621.500" r="2" fill="none" stroke="#222"/>
        <g fill="#fff01c" stroke="#222"><path d="M544.500 536.500l4 4-4 4-4-4zM544.500 600.500l4 4-4 4-4-4zM577.500 568.500l4 4-4 4-4-4z"/><path d="M513 569l3.500 3.500-3.500 3.500z" stroke="none"/></g>
        <path d="M1087.500 572.500V546M1087.500 572.500h7" stroke="#d31a22" stroke-width="1.200" fill="none"/><path d="M1087.500 539l3 11h-6z" fill="#e0131c"/>

        <g><path d="M301 938v-22" stroke="#145c16" stroke-width="4"/><path d="M301 909l4 10h-8z" fill="#0d4d10"/><path d="M303 939h20" stroke="#b01818" stroke-width="4"/><path d="M330 939l-9 4v-8z" fill="#8f0f0f"/><circle cx="301" cy="939" r="4" fill="#1712a8"/><circle cx="302.500" cy="937" r="1.200" fill="#aab6f5"/><text class="axis" x="301" y="903" fill="#227a28">Y</text><text class="axis" x="337" y="939" fill="#c03030">X</text></g>
      </svg>
    </section>
  </div>

  <div class="callout">
    <svg viewBox="0 0 600 100" aria-hidden="true"><g fill="none" stroke="#ec1c24" stroke-width="8" stroke-linecap="round"><ellipse cx="91" cy="50" rx="66" ry="24"/><path d="M157 48L222 38M157 49q20 3 40 3 60-3 110-10 60-3 84 4 32 9 25 28-1 3-2 6"/><path d="M157 49q15 4 34 10l33 8"/><path d="M165 49l28 2 4-6z" stroke-width="5" fill="#ec1c24"/></g></svg>
    <p>This defines the circle radius.<br>You can type "3/32" or "0.094".</p>
  </div>
</main>
<script src="app.js"></script>
</body>
</html>
```

FILE: styles.css
```css
* { box-sizing: border-box; }
body {
  margin: 0;
  height: 100vh;
  display: flex;
  flex-direction: column;
  overflow: hidden;
  background: #f7f7f7;
  color: #1a1a1a;
  font: 12px/13px "Open Sans", "Noto Sans", sans-serif;
}
button {
  display: flex;
  align-items: center;
  justify-content: center;
  margin: 0;
  padding: 0;
  border: 0;
  background: none;
  color: inherit;
  font: inherit;
}
h1, h2, h3, p { margin: 0; font: inherit; }
.defs { position: absolute; width: 0; height: 0; }
.ic { width: 18px; height: 18px; flex: none; display: block; }
.ic16 { width: 14px; height: 14px; flex: none; display: block; }
.dd::after {
  content: "";
  border: 3px solid transparent;
  border-top: 4px solid #333;
  border-bottom: 0;
}
.dd.faint::after, .dd.gray::after { border-top-color: #888; }

/* Title bar */
.titlebar {
  flex: none;
  display: flex;
  align-items: center;
  height: 35px;
  padding-bottom: 6px;
  border-bottom: 1px solid #b9b9b9;
  position: relative;
}
.brand { display: flex; align-items: center; width: 134px; padding: 4px 0 0 4px; flex: none; }
.brand-mark { width: 20px; height: 20px; flex: none; }
.brand-name { margin-left: 5px; color: #c8322b; font: italic 14px/16px "Open Sans", sans-serif; }
.menu { display: flex; gap: 14px; padding: 6px 0 0 8px; width: 256px; flex: none; }
.pin { width: 28px; height: 34px; padding-bottom: 4px; border-right: 1px solid #c4c4c4; align-self: flex-start; flex: none; }
.quick { display: flex; padding: 5px 0 0 16px; flex: none; }
.quick button { width: 30px; height: 24px; }
.quick .dd { width: 14px; }
.doc-title { flex: 1; padding: 5px 0 0 267px; white-space: nowrap; font-size: 11px; }
.search { display: flex; align-items: center; width: 202px; height: 23px; margin-top: 5px; padding-left: 6px; background: #fff; border: 1px solid #c0c0c0; flex: none; }
.search input { flex: 1; min-width: 0; border: 0; padding: 0 0 0 6px; background: none; font: 12px "Open Sans", sans-serif; color: #555; outline: 0; }
.search input::placeholder { color: #666; }
.search .dd { width: 12px; }
.prompt { width: 14px; height: 14px; }
.lens { width: 14px; height: 14px; }
.win { display: flex; width: 167px; padding: 5px 0 0 3px; overflow: hidden; flex: none; }
.win button { width: 36px; flex: none; }

/* View toolbar */
.viewbar { flex: none; height: 32px; border-bottom: 1px solid #b9b9b9; }
.icons { display: flex; align-items: center; width: 386px; height: 31px; padding: 0 0 2px 13px; border-right: 1px solid #888; background: repeating-linear-gradient(#999 0 1px, transparent 1px 3px) 3px 3px / 2px 25px no-repeat; }
.icons button { width: 27px; }
.icons .dd { width: 15px; }
.vsep { width: 1px; height: 22px; margin: 0 3px; background: #888; }

/* Command ribbon */
.ribbon {
  flex: none;
  display: grid;
  grid-template-columns: 44px 66px 149px 51px 48px 49px 48px 176px 86px 45px 44px 48px 57px 58px;
  height: 81px;
  padding: 1px 0 2px 5px;
}
.ribbon .dd { height: 20px; }
.cell, .exit { display: flex; flex-direction: column; }
.exit { border: 1px solid #777; }
.exit .big { border-bottom: 1px solid #777; padding-top: 3px; }
.big { flex: 1; flex-direction: column; justify-content: flex-start; gap: 3px; width: 100%; padding-top: 4px; text-align: center; }
.cell .dd, .exit .dd { width: 100%; flex: none; }
.big:disabled { color: #b4b4b4; }
.on { background: #b0b0b0; }
.big.framed { border: 1px solid #666; padding-top: 3px; }
.ruled { border-right: 1px solid #c4c4c4; }
.tools { display: grid; grid-template-columns: 26px 14px 26px 14px 26px 14px 26px; grid-template-rows: repeat(3, 26px); padding-left: 1px; border: solid #c4c4c4; border-width: 0 1px; }
.tools .dd { height: 26px; }
.tools .on { border: 1px solid #777; }
.boxed { border: 1px solid #999; border-left: 0; }
.rows { display: grid; grid-template-columns: 158px 16px; grid-template-rows: repeat(3, 26px); padding-left: 1px; border-right: 1px solid #c4c4c4; }
.rows button { justify-content: flex-start; gap: 8px; white-space: nowrap; }
.rows .dd { height: 26px; justify-content: center; }

/* Workspace */
.workspace {
  position: relative;
  flex: 1;
  min-height: 0;
  display: flex;
  flex-direction: column;
  border-top: 1px solid #808080;
  background:
    radial-gradient(ellipse 26% 22% at 14% 52%, #e2e6f0 0, rgba(226,230,240,0) 100%),
    radial-gradient(ellipse 30% 62% at 84% 22%, #dde1eb 0, #e3e7f0 45%, rgba(240,242,247,0) 100%),
    radial-gradient(ellipse 30% 50% at 100% 30%, #eceef3 0, rgba(240,242,247,0) 100%),
    radial-gradient(ellipse 16% 20% at 12% 100%, #f2f4f9 0, rgba(255,255,255,0) 100%),
    #fdfdfe;
}
.tabrow { flex: none; display: flex; height: 22px; }
.tabs { display: grid; grid-template-columns: 59px 55px 79px 99px 57px 60px 107px 133px 121px 146px; flex: none; }
.tabs button { border: solid #808080; border-width: 0 1px 1px 0; background: #d4d4d4; color: #333; white-space: nowrap; }
.tabs .active { background: #f7f7f7; border-bottom-color: #f7f7f7; font-weight: 700; }
.hud { display: flex; height: 30px; padding-left: 6px; opacity: .78; flex: none; }
.hud button { width: 26px; }
.hud .dd { width: 14px; }
.hud .dd::after { border-top-color: #777; }
.docwin { display: flex; height: 31px; margin-left: auto; width: 88px; overflow: hidden; flex: none; }
.docwin button { width: 26px; flex: none; }

.body { flex: 1; min-height: 0; display: flex; }
.rail { width: 31px; flex: none; padding: 13px 0 0 2px; background: #f7f7f7 repeating-linear-gradient(90deg, #999 0 1px, transparent 1px 3px) 2px 2px / 28px 2px no-repeat; }
.rail button { width: 26px; height: 26px; }
.rail hr { width: 25px; margin: 3px 0 4px 2px; border: 0; border-top: 1px solid #888; }
.rail hr.last { width: 29px; margin-left: -2px; margin-top: 7px; }

.panel { position: relative; width: 230px; flex: none; background: #f7f7f7; border-right: 1px solid #808080; }
.grip { height: 16px; margin: 4px 2px 4px 0; display: flex; align-items: center; justify-content: center; border: solid #bbb; border-width: 1px 0; }
.grip i, .handle i { width: 6px; height: 6px; border: 1px solid #888; border-radius: 50%; background: #ccc; }
.ptabs { display: flex; height: 26px; margin: 0 2px; border-top: 1px solid #999; position: relative; overflow: hidden; }
.ptabs > button { width: 40px; flex: none; background: #d4d4d4; border: solid #888; border-width: 0 1px 1px 0; }
.ptabs > button.active { background: #f7f7f7; border-bottom: 0; }
.pnav { position: absolute; right: 0; bottom: 0; display: flex; height: 19px; }
.pnav button { width: 18px; background: #fff; border: 1px solid #ccc; }
.pnav svg, .crumb button svg { width: 8px; height: 8px; }
.phead { display: flex; align-items: center; height: 32px; padding: 0 14px 0 10px; gap: 6px; }
.phead h2 { flex: 1; font-size: 13px; font-weight: 600; }
.pok { height: 31px; padding: 5px 0 0 8px; }
.check { width: 15px; height: 13px; }
.group { margin: 0 7px 0 5px; padding: 0 4px 9px; border-top: 1px solid #a8a8a8; }
.group h3 { display: flex; justify-content: space-between; align-items: center; height: 27px; padding-top: 2px; font-weight: 600; color: #444; }
.chev { width: 10px; height: 7px; }
.types { display: flex; gap: 14px; padding-bottom: 1px; }
.types button { width: 48px; height: 48px; border: 1px solid #888; background-color: #fbfbfb; }
.types button.on { background: #b0b0b0; border-color: #666; }
.types svg { width: 40px; height: 40px; overflow: visible; font: 900 9px "DejaVu Sans", sans-serif; }
.relations { display: flex; gap: 8px; padding-left: 3px; }
.relations .ic { margin-top: 3px; }
.list { flex: 1; height: 80px; background: #fff; border: 1px solid #8a8fa3; }
.status { display: flex; align-items: center; gap: 9px; height: 33px; padding: 9px 0 0 2px; }
.fix { display: flex; align-items: center; gap: 5px; height: 25px; }
.fix button { width: 24px; height: 24px; border: 1px solid #888; background: #fdfdfd; }
.opt { display: flex; align-items: center; gap: 3px; height: 17px; padding-left: 29px; }
.opt input { appearance: none; width: 13px; height: 13px; margin: 0; border: 1px solid #555; border-radius: 3px; background: #fdfdfd; }
.param { display: flex; align-items: center; gap: 2px; height: 21px; margin-bottom: 2px; padding-left: 3px; }
.param .ic { margin: 4px 6px 0 0; }
.param input { width: 156px; height: 21px; padding: 0 5px; border: 1px solid #e4e4e4; border-bottom: 1px solid #777; background: #fff; font: 11px "Open Sans", sans-serif; color: #111; outline: 0; }
.param.radius { margin-top: 11px; }
.radius input { border-bottom: 2px solid #1a6a9a; }
.radius input::selection { background: #0a74d0; color: #fff; }
.spin { display: flex; flex-direction: column; gap: 1px; }
.spin button { width: 17px; height: 10px; border: 1px solid #fff; border-right-color: #777; border-bottom-color: #777; background: #efefef; }
.spin svg { width: 4px; height: 3px; }
.handle { position: absolute; left: 229px; top: 382px; width: 9px; height: 39px; background: #f7f7f7; border: 1px solid #808080; border-left: 0; z-index: 1; }

.viewport { position: relative; flex: 1; min-width: 0; }
.crumb { position: absolute; left: 0; top: 7px; display: flex; align-items: center; height: 16px; color: #000; white-space: nowrap; font-size: 11px; }
.crumb button { width: 14px; margin-right: 5px; }
.crumb .part { margin: 0 5px 0 -6px; }
.drawing { display: block; width: 100%; height: 100%; }
.dimline path { marker-start: url(#arrow); marker-end: url(#arrow); }
.dimtext { font: 17px Lato, sans-serif; text-anchor: middle; fill: #111; }
.relnum { font: 700 10px "DejaVu Sans Condensed", "Liberation Sans", sans-serif; fill: #000; }
.axis { font: 8px "Liberation Sans", sans-serif; text-anchor: middle; }

/* Marked-up note over the model */
.callout { position: absolute; left: 0; top: 533px; width: 614px; pointer-events: none; z-index: 2; }
.callout svg { display: block; width: 600px; height: 100px; margin-bottom: -2px; }
.callout p { text-align: center; color: #ec1c24; font: 700 37px/41px "Liberation Sans", Arial, sans-serif; }
```

FILE: app.js
```js
const radius = document.getElementById('radius');
radius.focus();
radius.select();
```
